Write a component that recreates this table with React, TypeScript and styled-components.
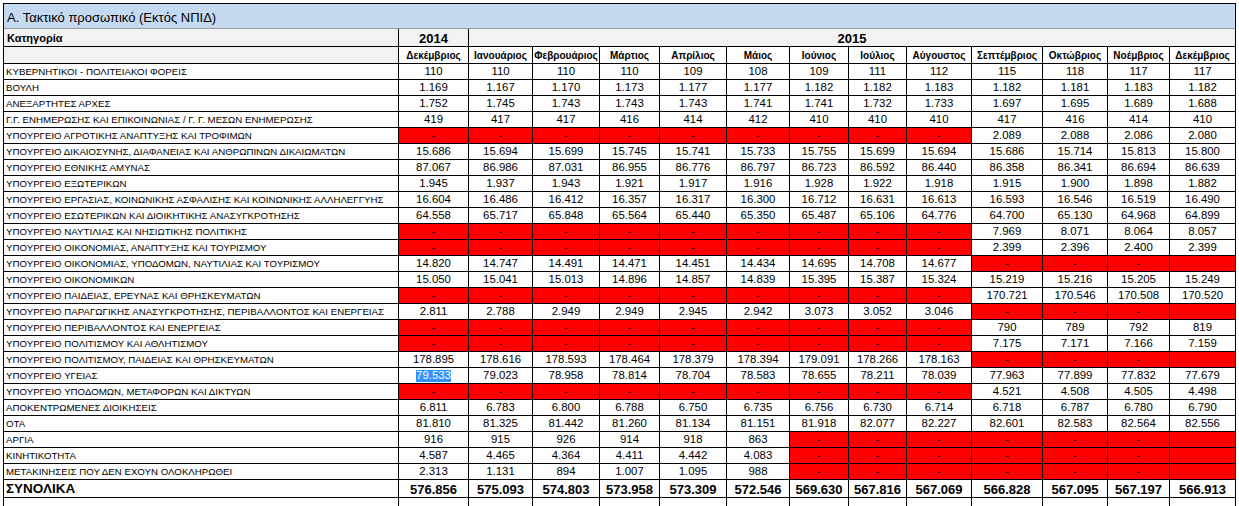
import styled, { createGlobalStyle } from 'styled-components'

const GlobalStyle = createGlobalStyle`
  html, body {
    margin: 0;
    padding: 0;
    background: #ffffff;
    overflow: hidden;
  }
  body {
    font-family: "Liberation Sans", Arial, sans-serif;
    color: #000;
  }
`

const MONTHS = [
  'Δεκέμβριος', 'Ιανουάριος', 'Φεβρουάριος', 'Μάρτιος', 'Απρίλιος', 'Μάιος', 'Ιούνιος',
  'Ιούλιος', 'Αύγουστος', 'Σεπτέμβριος', 'Οκτώβριος', 'Νοέμβριος', 'Δεκέμβριος',
]

const R = '' // empty = red cell

const ROWS: [string, string[]][] = [
  ['ΚΥΒΕΡΝΗΤΙΚΟΙ - ΠΟΛΙΤΕΙΑΚΟΙ ΦΟΡΕΙΣ', ['110', '110', '110', '110', '109', '108', '109', '111', '112', '115', '118', '117', '117']],
  ['ΒΟΥΛΗ', ['1.169', '1.167', '1.170', '1.173', '1.177', '1.177', '1.182', '1.182', '1.183', '1.182', '1.181', '1.183', '1.182']],
  ['ΑΝΕΞΑΡΤΗΤΕΣ ΑΡΧΕΣ', ['1.752', '1.745', '1.743', '1.743', '1.743', '1.741', '1.741', '1.732', '1.733', '1.697', '1.695', '1.689', '1.688']],
  ['Γ.Γ. ΕΝΗΜΕΡΩΣΗΣ ΚΑΙ ΕΠΙΚΟΙΝΩΝΙΑΣ / Γ. Γ. ΜΕΣΩΝ ΕΝΗΜΕΡΩΣΗΣ', ['419', '417', '417', '416', '414', '412', '410', '410', '410', '417', '416', '414', '410']],
  ['ΥΠΟΥΡΓΕΙΟ ΑΓΡΟΤΙΚΗΣ ΑΝΑΠΤΥΞΗΣ ΚΑΙ ΤΡΟΦΙΜΩΝ', [R, R, R, R, R, R, R, R, R, '2.089', '2.088', '2.086', '2.080']],
  ['ΥΠΟΥΡΓΕΙΟ ΔΙΚΑΙΟΣΥΝΗΣ, ΔΙΑΦΑΝΕΙΑΣ ΚΑΙ ΑΝΘΡΩΠΙΝΩΝ ΔΙΚΑΙΩΜΑΤΩΝ', ['15.686', '15.694', '15.699', '15.745', '15.741', '15.733', '15.755', '15.699', '15.694', '15.686', '15.714', '15.813', '15.800']],
  ['ΥΠΟΥΡΓΕΙΟ ΕΘΝΙΚΗΣ ΑΜΥΝΑΣ', ['87.067', '86.986', '87.031', '86.955', '86.776', '86.797', '86.723', '86.592', '86.440', '86.358', '86.341', '86.694', '86.639']],
  ['ΥΠΟΥΡΓΕΙΟ ΕΞΩΤΕΡΙΚΩΝ', ['1.945', '1.937', '1.943', '1.921', '1.917', '1.916', '1.928', '1.922', '1.918', '1.915', '1.900', '1.898', '1.882']],
  ['ΥΠΟΥΡΓΕΙΟ ΕΡΓΑΣΙΑΣ, ΚΟΙΝΩΝΙΚΗΣ ΑΣΦΑΛΙΣΗΣ ΚΑΙ ΚΟΙΝΩΝΙΚΗΣ ΑΛΛΗΛΕΓΓΥΗΣ', ['16.604', '16.486', '16.412', '16.357', '16.317', '16.300', '16.712', '16.631', '16.613', '16.593', '16.546', '16.519', '16.490']],
  ['ΥΠΟΥΡΓΕΙΟ ΕΣΩΤΕΡΙΚΩΝ ΚΑΙ ΔΙΟΙΚΗΤΙΚΗΣ ΑΝΑΣΥΓΚΡΟΤΗΣΗΣ', ['64.558', '65.717', '65.848', '65.564', '65.440', '65.350', '65.487', '65.106', '64.776', '64.700', '65.130', '64.968', '64.899']],
  ['ΥΠΟΥΡΓΕΙΟ ΝΑΥΤΙΛΙΑΣ ΚΑΙ ΝΗΣΙΩΤΙΚΗΣ ΠΟΛΙΤΙΚΗΣ', [R, R, R, R, R, R, R, R, R, '7.969', '8.071', '8.064', '8.057']],
  ['ΥΠΟΥΡΓΕΙΟ ΟΙΚΟΝΟΜΙΑΣ, ΑΝΑΠΤΥΞΗΣ ΚΑΙ ΤΟΥΡΙΣΜΟΥ', [R, R, R, R, R, R, R, R, R, '2.399', '2.396', '2.400', '2.399']],
  ['ΥΠΟΥΡΓΕΙΟ ΟΙΚΟΝΟΜΙΑΣ, ΥΠΟΔΟΜΩΝ, ΝΑΥΤΙΛΙΑΣ ΚΑΙ ΤΟΥΡΙΣΜΟΥ', ['14.820', '14.747', '14.491', '14.471', '14.451', '14.434', '14.695', '14.708', '14.677', R, R, R, R]],
  ['ΥΠΟΥΡΓΕΙΟ ΟΙΚΟΝΟΜΙΚΩΝ', ['15.050', '15.041', '15.013', '14.896', '14.857', '14.839', '15.395', '15.387', '15.324', '15.219', '15.216', '15.205', '15.249']],
  ['ΥΠΟΥΡΓΕΙΟ ΠΑΙΔΕΙΑΣ, ΕΡΕΥΝΑΣ ΚΑΙ ΘΡΗΣΚΕΥΜΑΤΩΝ', [R, R, R, R, R, R, R, R, R, '170.721', '170.546', '170.508', '170.520']],
  ['ΥΠΟΥΡΓΕΙΟ ΠΑΡΑΓΩΓΙΚΗΣ ΑΝΑΣΥΓΚΡΟΤΗΣΗΣ, ΠΕΡΙΒΑΛΛΟΝΤΟΣ ΚΑΙ ΕΝΕΡΓΕΙΑΣ', ['2.811', '2.788', '2.949', '2.949', '2.945', '2.942', '3.073', '3.052', '3.046', R, R, R, R]],
  ['ΥΠΟΥΡΓΕΙΟ ΠΕΡΙΒΑΛΛΟΝΤΟΣ ΚΑΙ ΕΝΕΡΓΕΙΑΣ', [R, R, R, R, R, R, R, R, R, '790', '789', '792', '819']],
  ['ΥΠΟΥΡΓΕΙΟ ΠΟΛΙΤΙΣΜΟΥ ΚΑΙ ΑΘΛΗΤΙΣΜΟΥ', [R, R, R, R, R, R, R, R, R, '7.175', '7.171', '7.166', '7.159']],
  ['ΥΠΟΥΡΓΕΙΟ ΠΟΛΙΤΙΣΜΟΥ, ΠΑΙΔΕΙΑΣ ΚΑΙ ΘΡΗΣΚΕΥΜΑΤΩΝ', ['178.895', '178.616', '178.593', '178.464', '178.379', '178.394', '179.091', '178.266', '178.163', R, R, R, R]],
  ['ΥΠΟΥΡΓΕΙΟ ΥΓΕΙΑΣ', ['79.533', '79.023', '78.958', '78.814', '78.704', '78.583', '78.655', '78.211', '78.039', '77.963', '77.899', '77.832', '77.679']],
  ['ΥΠΟΥΡΓΕΙΟ ΥΠΟΔΟΜΩΝ, ΜΕΤΑΦΟΡΩΝ ΚΑΙ ΔΙΚΤΥΩΝ', [R, R, R, R, R, R, R, R, R, '4.521', '4.508', '4.505', '4.498']],
  ['ΑΠΟΚΕΝΤΡΩΜΕΝΕΣ ΔΙΟΙΚΗΣΕΙΣ', ['6.811', '6.783', '6.800', '6.788', '6.750', '6.735', '6.756', '6.730', '6.714', '6.718', '6.787', '6.780', '6.790']],
  ['ΟΤΑ', ['81.810', '81.325', '81.442', '81.260', '81.134', '81.151', '81.918', '82.077', '82.227', '82.601', '82.583', '82.564', '82.556']],
  ['ΑΡΓΙΑ', ['916', '915', '926', '914', '918', '863', R, R, R, R, R, R, R]],
  ['ΚΙΝΗΤΙΚΟΤΗΤΑ', ['4.587', '4.465', '4.364', '4.411', '4.442', '4.083', R, R, R, R, R, R, R]],
  ['ΜΕΤΑΚΙΝΗΣΕΙΣ ΠΟΥ ΔΕΝ ΕΧΟΥΝ ΟΛΟΚΛΗΡΩΘΕΙ', ['2.313', '1.131', '894', '1.007', '1.095', '988', R, R, R, R, R, R, R]],
]

const TOTALS = ['576.856', '575.093', '574.803', '573.958', '573.309', '572.546', '569.630', '567.816', '567.069', '566.828', '567.095', '567.197', '566.913']

export default function App() {
  return (
    <>
      <GlobalStyle />
      <Sheet>
        <Title>Α. Τακτικό προσωπικό (Εκτός ΝΠΙΔ)</Title>

        <HeadLabel>Κατηγορία</HeadLabel>
        <YearCell>2014</YearCell>
        <YearCell $span>2015</YearCell>

        <HeadBlank />
        {MONTHS.map((m, i) => (
          <MonthCell key={i}>{m}</MonthCell>
        ))}

        {ROWS.map(([label, values], r) => (
          <Row key={r} label={label} values={values} selected={r === 19} />
        ))}

        <TotalLabel>ΣΥΝΟΛΙΚΑ</TotalLabel>
        {TOTALS.map((t, i) => (
          <TotalCell key={i}>{t}</TotalCell>
        ))}

        {Array.from({ length: 14 }).map((_, i) => (
          <Cell key={i} />
        ))}
      </Sheet>
    </>
  )
}

function Row({ label, values, selected }: { label: string; values: string[]; selected: boolean }) {
  return (
    <>
      <LabelCell>{label}</LabelCell>
      {values.map((v, i) => {
        if (v === R) {
          return <Cell key={i} $red>{i < values.length - 1 ? '-' : ''}</Cell>
        }
        if (selected && i === 0) {
          return (
            <Cell key={i}>
              <Selection>{v}</Selection>
            </Cell>
          )
        }
        return <Cell key={i}>{v}</Cell>
      })}
    </>
  )
}

const Sheet = styled.div`
  display: grid;
  grid-template-columns: 395px 70px 64px 67px 60px 67px 63px 59px 58px 65px 71px 65px 62px 66px;
  grid-template-rows: 25px 18px 17px repeat(26, 16px) 18px 16px;
  width: max-content;
  margin: 3px 0 0 3px;
  border-top: 1px solid #000;
  border-left: 1px solid #000;
`

const Cell = styled.div<{ $red?: boolean }>`
  box-sizing: border-box;
  display: flex;
  align-items: center;
  justify-content: center;
  padding-top: 1px;
  border-right: 1px solid #000;
  border-bottom: 1px solid #000;
  background: ${p => (p.$red ? '#ff0000' : '#ffffff')};
  font-size: 11.4px;
  line-height: 1;
  white-space: nowrap;
  overflow: hidden;
`

const Title = styled.div`
  grid-column: 1 / -1;
  box-sizing: border-box;
  display: flex;
  align-items: center;
  padding: 3px 0 0 3px;
  border-right: 1px solid #000;
  border-bottom: 1px solid #9c9c9c;
  background: #c5d9f1;
  font-size: 13px;
`

const HeadLabel = styled(Cell)`
  justify-content: flex-start;
  padding-left: 3px;
  background: #f2f2f2;
  font-weight: bold;
  font-size: 11px;
`

const YearCell = styled(Cell)<{ $span?: boolean }>`
  grid-column: ${p => (p.$span ? '3 / -1' : 'auto')};
  background: #f2f2f2;
  font-weight: bold;
  font-size: 13px;
`

const HeadBlank = styled(Cell)`
  background: #f2f2f2;
`

const MonthCell = styled(Cell)`
  font-weight: bold;
  font-size: 10px;
`

const LabelCell = styled(Cell)`
  justify-content: flex-start;
  padding-left: 2px;
  font-size: 9.7px;
`

const TotalLabel = styled(Cell)`
  justify-content: flex-start;
  padding-left: 2px;
  font-weight: bold;
  font-size: 13.5px;
`

const TotalCell = styled(Cell)`
  font-weight: bold;
  font-size: 13px;
`

const Selection = styled.span`
  background: #3390ff;
  color: #ffffff;
`
